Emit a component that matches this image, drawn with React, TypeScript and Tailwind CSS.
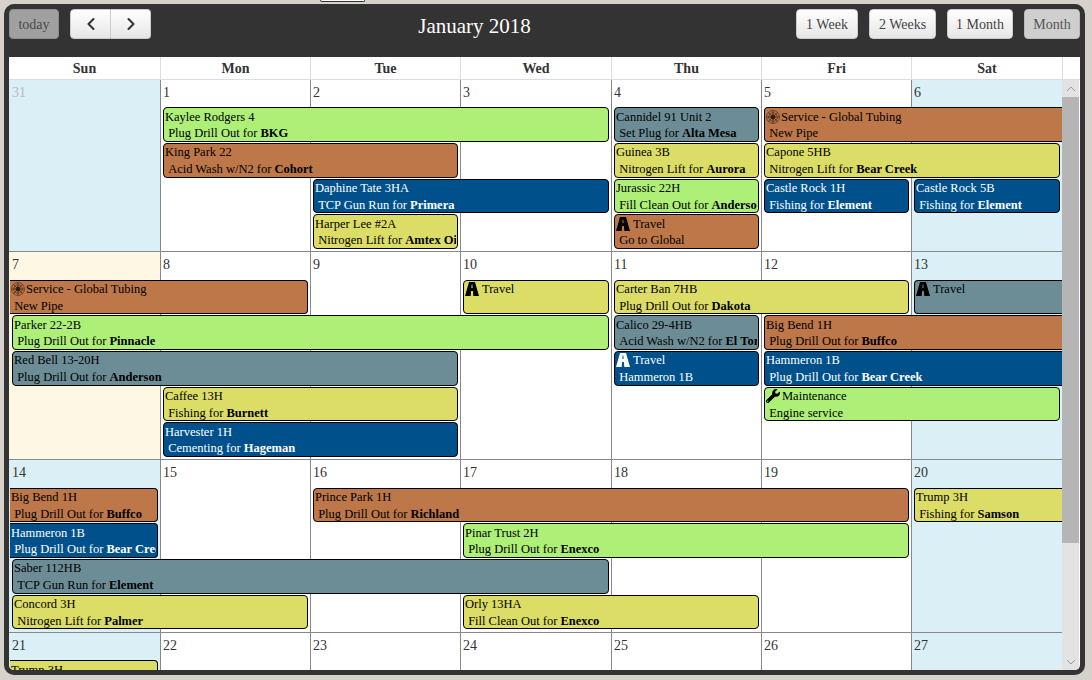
import { FaWrench } from 'react-icons/fa';
import { ChevronLeft, ChevronRight } from 'lucide-react';

type Kind = 'green' | 'brown' | 'grey' | 'yellow' | 'blue';
type Ev = {
  pos: string;
  kind: Kind;
  title: string;
  line: string;
  bold?: string;
  icon?: 'road' | 'wrench' | 'service';
  openLeft?: boolean;
  openRight?: boolean;
};

const colors: Record<Kind, string> = {
  green: 'bg-[#aeef78] text-black',
  brown: 'bg-[#bd7749] text-black',
  grey: 'bg-[#6d8d96] text-black',
  yellow: 'bg-[#dcdd67] text-black',
  blue: 'bg-[#00518b] text-white',
};

const dayCols = [
  'col-start-1 pl-[3px]',
  'col-start-2 border-l pl-[2px]',
  'col-start-3 border-l pl-[2px]',
  'col-start-4 border-l pl-[2px]',
  'col-start-5 border-l pl-[2px]',
  'col-start-6 border-l pl-[2px]',
  'col-start-7 border-l pl-[2px]',
];

const weeks: { rows: string; days: number[]; muted?: number; sunBg?: string; events: Ev[] }[] = [
  {
    rows: 'h-[172px] grid-rows-[27.3px_repeat(4,35.7px)_1fr]',
    days: [31, 1, 2, 3, 4, 5, 6],
    muted: 31,
    events: [
      { pos: 'col-start-2 col-span-3 row-start-2', kind: 'green', title: 'Kaylee Rodgers 4', line: 'Plug Drill Out for ', bold: 'BKG' },
      { pos: 'col-start-5 col-span-1 row-start-2', kind: 'grey', title: 'Cannidel 91 Unit 2', line: 'Set Plug for ', bold: 'Alta Mesa' },
      { pos: 'col-start-6 col-span-2 row-start-2', kind: 'brown', title: 'Service - Global Tubing', line: 'New Pipe', icon: 'service', openRight: true },
      { pos: 'col-start-2 col-span-2 row-start-3', kind: 'brown', title: 'King Park 22', line: 'Acid Wash w/N2 for ', bold: 'Cohort' },
      { pos: 'col-start-5 col-span-1 row-start-3', kind: 'yellow', title: 'Guinea 3B', line: 'Nitrogen Lift for ', bold: 'Aurora' },
      { pos: 'col-start-6 col-span-2 row-start-3', kind: 'yellow', title: 'Capone 5HB', line: 'Nitrogen Lift for ', bold: 'Bear Creek' },
      { pos: 'col-start-3 col-span-2 row-start-4', kind: 'blue', title: 'Daphine Tate 3HA', line: 'TCP Gun Run for ', bold: 'Primera' },
      { pos: 'col-start-5 col-span-1 row-start-4', kind: 'green', title: 'Jurassic 22H', line: 'Fill Clean Out for ', bold: 'Anderson' },
      { pos: 'col-start-6 col-span-1 row-start-4', kind: 'blue', title: 'Castle Rock 1H', line: 'Fishing for ', bold: 'Element' },
      { pos: 'col-start-7 col-span-1 row-start-4', kind: 'blue', title: 'Castle Rock 5B', line: 'Fishing for ', bold: 'Element' },
      { pos: 'col-start-3 col-span-1 row-start-5', kind: 'yellow', title: 'Harper Lee #2A', line: 'Nitrogen Lift for ', bold: 'Amtex Oil' },
      { pos: 'col-start-5 col-span-1 row-start-5', kind: 'brown', title: 'Travel', line: 'Go to Global', icon: 'road' },
    ],
  },
  {
    rows: 'h-[208px] grid-rows-[27.6px_repeat(5,35.7px)_1fr]',
    days: [7, 8, 9, 10, 11, 12, 13],
    sunBg: 'bg-[#fef7e3]',
    events: [
      { pos: 'col-start-1 col-span-2 row-start-2', kind: 'brown', title: 'Service - Global Tubing', line: 'New Pipe', icon: 'service', openLeft: true },
      { pos: 'col-start-4 col-span-1 row-start-2', kind: 'yellow', title: 'Travel', line: '', icon: 'road' },
      { pos: 'col-start-5 col-span-2 row-start-2', kind: 'yellow', title: 'Carter Ban 7HB', line: 'Plug Drill Out for ', bold: 'Dakota' },
      { pos: 'col-start-7 col-span-1 row-start-2', kind: 'grey', title: 'Travel', line: '', icon: 'road', openRight: true },
      { pos: 'col-start-1 col-span-4 row-start-3', kind: 'green', title: 'Parker 22-2B', line: 'Plug Drill Out for ', bold: 'Pinnacle' },
      { pos: 'col-start-5 col-span-1 row-start-3', kind: 'grey', title: 'Calico 29-4HB', line: 'Acid Wash w/N2 for ', bold: 'El Toro' },
      { pos: 'col-start-6 col-span-2 row-start-3', kind: 'brown', title: 'Big Bend 1H', line: 'Plug Drill Out for ', bold: 'Buffco', openRight: true },
      { pos: 'col-start-1 col-span-3 row-start-4', kind: 'grey', title: 'Red Bell 13-20H', line: 'Plug Drill Out for ', bold: 'Anderson' },
      { pos: 'col-start-5 col-span-1 row-start-4', kind: 'blue', title: 'Travel', line: 'Hammeron 1B', icon: 'road' },
      { pos: 'col-start-6 col-span-2 row-start-4', kind: 'blue', title: 'Hammeron 1B', line: 'Plug Drill Out for ', bold: 'Bear Creek', openRight: true },
      { pos: 'col-start-2 col-span-2 row-start-5', kind: 'yellow', title: 'Caffee 13H', line: 'Fishing for ', bold: 'Burnett' },
      { pos: 'col-start-6 col-span-2 row-start-5', kind: 'green', title: 'Maintenance', line: 'Engine service', icon: 'wrench' },
      { pos: 'col-start-2 col-span-2 row-start-6', kind: 'blue', title: 'Harvester 1H', line: 'Cementing for ', bold: 'Hageman' },
    ],
  },
  {
    rows: 'h-[173px] grid-rows-[27.6px_repeat(4,35.7px)_1fr]',
    days: [14, 15, 16, 17, 18, 19, 20],
    events: [
      { pos: 'col-start-1 col-span-1 row-start-2', kind: 'brown', title: 'Big Bend 1H', line: 'Plug Drill Out for ', bold: 'Buffco', openLeft: true },
      { pos: 'col-start-3 col-span-4 row-start-2', kind: 'brown', title: 'Prince Park 1H', line: 'Plug Drill Out for ', bold: 'Richland' },
      { pos: 'col-start-7 col-span-1 row-start-2', kind: 'yellow', title: 'Trump 3H', line: 'Fishing for ', bold: 'Samson', openRight: true },
      { pos: 'col-start-1 col-span-1 row-start-3', kind: 'blue', title: 'Hammeron 1B', line: 'Plug Drill Out for ', bold: 'Bear Creek', openLeft: true },
      { pos: 'col-start-4 col-span-3 row-start-3', kind: 'green', title: 'Pinar Trust 2H', line: 'Plug Drill Out for ', bold: 'Enexco' },
      { pos: 'col-start-1 col-span-4 row-start-4', kind: 'grey', title: 'Saber 112HB', line: 'TCP Gun Run for ', bold: 'Element' },
      { pos: 'col-start-1 col-span-2 row-start-5', kind: 'yellow', title: 'Concord 3H', line: 'Nitrogen Lift for ', bold: 'Palmer' },
      { pos: 'col-start-4 col-span-2 row-start-5', kind: 'yellow', title: 'Orly 13HA', line: 'Fill Clean Out for ', bold: 'Enexco' },
    ],
  },
  {
    rows: 'h-[172px] grid-rows-[27.3px_repeat(4,35.7px)_1fr]',
    days: [21, 22, 23, 24, 25, 26, 27],
    events: [
      { pos: 'col-start-1 col-span-1 row-start-2', kind: 'yellow', title: 'Trump 3H', line: 'Fishing for ', bold: 'Samson', openLeft: true },
    ],
  },
];

const ServiceIcon = () => (
  <svg viewBox="0 0 14 14" className="w-[14px] h-[14px] shrink-0 mr-px" fill="none" stroke="#000" strokeWidth="0.6" opacity="0.75">
    <circle cx="7" cy="7" r="6.4" />
    <circle cx="7" cy="7" r="4.2" />
    <circle cx="7" cy="7" r="2.2" fill="#000" />
    <path d="M7 .6v12.8M.6 7h12.8M2.5 2.5l9 9M11.5 2.5l-9 9" />
  </svg>
);

// road sign used by the Travel events
const RoadIcon = () => (
  <svg viewBox="0 0 14 14" className="w-[14px] h-[14px] shrink-0 mr-[3px]" fill="currentColor" fillRule="evenodd">
    <path d="M4 0H10L14 14H8.3L7.9 9H6.1L5.7 14H0ZM6.6 2.5L6.4 6H7.6L7.4 2.5Z" />
  </svg>
);

const Event = ({ ev }: { ev: Ev }) => (
  <div
    className={`${ev.pos} ${colors[ev.kind]} z-10 h-[34.8px] overflow-hidden whitespace-nowrap border-y border-black text-[12.5px] leading-[16px] pr-px ${
      ev.openLeft ? 'ml-px pl-px' : 'ml-[3px] border-l rounded-l-[4px] pl-px'
    } ${ev.openRight ? '' : 'mr-[2px] border-r rounded-r-[4px]'}`}
  >
    <div className="flex items-center h-[17px]">
      {ev.icon === 'road' && <RoadIcon />}
      {ev.icon === 'wrench' && <FaWrench className="w-[14px] h-[14px] shrink-0 mr-[2px]" />}
      {ev.icon === 'service' && <ServiceIcon />}
      <span>{ev.title}</span>
    </div>
    <div className="h-[16px] overflow-hidden">
      {ev.line && '\u00a0' + ev.line}
      {ev.bold && <b>{ev.bold}</b>}
    </div>
  </div>
);

const btn =
  'h-[30px] rounded-[4px] border border-[#ccc] bg-gradient-to-b from-white to-[#e6e6e6] text-[14px] text-[#444] flex items-center justify-center';

export default function App() {
  return (
    <div className="w-[1092px] h-[680px] overflow-hidden bg-[#d6d1ca] font-['Liberation_Serif',serif]">
      <div className="ml-[320px] w-[45px] h-[2px] bg-white border-b border-x border-[#333] rounded-b-[3px]" />
      <div className="mt-[2px] ml-[4px] w-[1081px] h-[671px] rounded-[10px] border-[5px] border-t-0 border-[#333] bg-[#333] overflow-hidden flex flex-col">
        <div className="h-[53px] shrink-0 pt-[5px] flex items-start relative">
          <button className="h-[30px] w-[50px] rounded-[4px] border border-[#8d8d8d] bg-[#a0a0a0] text-[14px] text-[#4a4a4a]">today</button>
          <div className="ml-[11px] flex">
            <button className={`${btn} w-[41px] rounded-r-none`}>
              <ChevronLeft size={20} strokeWidth={2.5} color="#333" />
            </button>
            <button className={`${btn} w-[40px] rounded-l-none border-l-0`}>
              <ChevronRight size={20} strokeWidth={2.5} color="#333" />
            </button>
          </div>
          <h2 className="flex-1 text-center text-[21px] leading-[34px] text-white pl-[2px]">January 2018</h2>
          <div className="flex gap-[11px]">
            <button className={`${btn} w-[62px]`}>1 Week</button>
            <button className={`${btn} w-[67px]`}>2 Weeks</button>
            <button className={`${btn} w-[66px]`}>1 Month</button>
            <button className="h-[30px] w-[56px] rounded-[4px] border border-[#bbb] bg-[#cfcfcf] text-[14px] text-[#555]">Month</button>
          </div>
        </div>
        <div className="h-[23px] shrink-0 bg-white border-b border-[#ddd] flex">
          <div className="w-[1053px] grid grid-cols-[151px_150px_150px_151px_150px_150px_151px]">
            {['Sun', 'Mon', 'Tue', 'Wed', 'Thu', 'Fri', 'Sat'].map((d, i) => (
              <div key={d} className={`text-center text-[14px] font-bold leading-[23px] text-[#333] ${i ? 'border-l border-[#ddd]' : ''}`}>
                {d}
              </div>
            ))}
          </div>
          <div className="w-[17px] border-l border-[#ddd]" />
        </div>
        <div className="flex flex-1 min-h-0 bg-white">
          <div className="w-[1053px] overflow-hidden">
            {weeks.map((w) => (
              <div key={w.days[0]} className={`grid grid-cols-[151px_150px_150px_151px_150px_150px_151px] ${w.rows} border-b border-[#888]`}>
                {w.days.map((d, i) => (
                  <div
                    key={d}
                    className={`${dayCols[i]} row-start-1 row-span-full border-[#888] text-[14px] leading-[25px] ${
                      i === 0 ? w.sunBg ?? 'bg-[#dbeff7]' : i === 6 ? 'bg-[#dbeff7]' : ''
                    } ${d === w.muted ? 'text-[#bbb]' : 'text-[#333]'}`}
                  >
                    {d}
                  </div>
                ))}
                {w.events.map((ev) => (
                  <Event key={ev.pos} ev={ev} />
                ))}
              </div>
            ))}
          </div>
          <div className="w-[17px] shrink-0 bg-[#e3e3e3] flex flex-col">
            <div className="h-[17px] shrink-0 flex items-center justify-center">
              <svg viewBox="0 0 10 6" className="w-[10px] h-[6px]" fill="none" stroke="#999" strokeWidth="1"><path d="M1 5l4-4 4 4" /></svg>
            </div>
            <div className="h-[446px] bg-[#b5b5b5]" />
            <div className="flex-1" />
            <div className="h-[17px] shrink-0 flex items-center justify-center">
              <svg viewBox="0 0 10 6" className="w-[10px] h-[6px]" fill="none" stroke="#999" strokeWidth="1"><path d="M1 1l4 4 4-4" /></svg>
            </div>
          </div>
        </div>
      </div>
    </div>
  );
}
